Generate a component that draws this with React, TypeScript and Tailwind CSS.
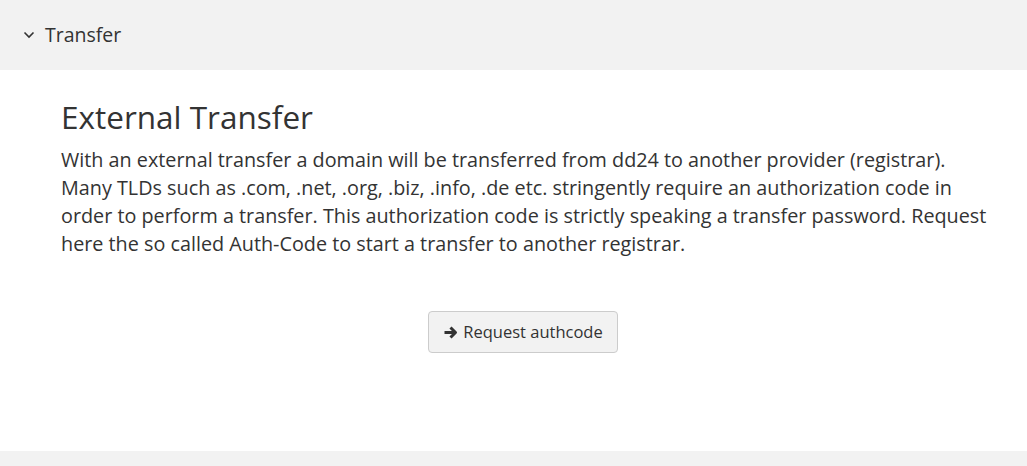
import React from 'react';

const ChevronDown: React.FC = () => (
  <svg width="12" height="8" viewBox="0 0 12 8" className="text-[#333]">
    <path d="M1.5 1.5 L6 6 L10.5 1.5" fill="none" stroke="currentColor" strokeWidth="1.6" />
  </svg>
);

const ArrowRight: React.FC = () => (
  <svg width="15" height="15" viewBox="0 0 15 15" className="text-[#333]">
    <path
      d="M1.5 7.5 H12 M7.5 2.5 L12.5 7.5 L7.5 12.5"
      fill="none"
      stroke="currentColor"
      strokeWidth="3"
      strokeLinejoin="round"
    />
  </svg>
);

const App: React.FC = () => {
  return (
    <div className="w-[1027px] h-[466px] bg-[#f2f2f2] font-['Open_Sans',sans-serif] text-[#333]">
      <div className="h-[70px] flex items-center pl-[23px] gap-[10px]">
        <ChevronDown />
        <span className="text-[19.5px] leading-none">Transfer</span>
      </div>
      <div className="h-[381px] bg-white pl-[61px] pr-[32px] pt-[29px]">
        <h2 className="text-[31.5px] leading-[36px] font-normal">External Transfer</h2>
        <p className="mt-[11px] text-[19.8px] leading-[28px]">
          With an external transfer a domain will be transferred from dd24 to another provider (registrar).
          Many TLDs such as .com, .net, .org, .biz, .info, .de etc. stringently require an authorization code in
          order to perform a transfer. This authorization code is strictly speaking a transfer password. Request
          here the so called Auth-Code to start a transfer to another registrar.
        </p>
        <div className="mt-[53px] flex justify-center pr-[10px]">
          <button className="h-[42px] w-[190px] flex items-center justify-center gap-[5px] bg-[#f2f2f2] border border-[#ccc] rounded-[4px] text-[16.5px] text-[#333]">
            <ArrowRight />
            <span>Request authcode</span>
          </button>
        </div>
      </div>
    </div>
  );
};

export default App;
